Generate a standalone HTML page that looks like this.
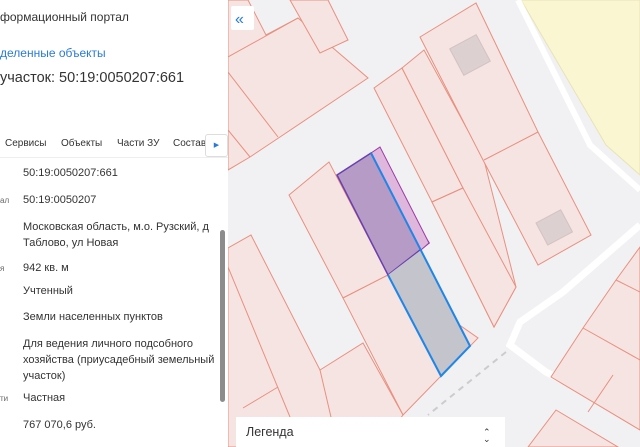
<!DOCTYPE html>
<html><head><meta charset="utf-8"><style>
body{margin:0;width:640px;height:447px;overflow:hidden;position:relative;font-family:"Liberation Sans",sans-serif;background:#f1f1f3}
#panel{position:absolute;left:0;top:0;width:228px;height:447px;background:#fff;color:#333}
.t{position:absolute;white-space:nowrap}
.v{position:absolute;left:23px;font-size:11px;color:#333;line-height:16px}
.l{position:absolute;left:0;font-size:8px;color:#666}
</style></head><body>
<svg style="position:absolute;left:228px;top:0" width="412" height="447" viewBox="0 0 412 447">
<rect width="412" height="447" fill="#f1f1f3"/>
<polygon points="293,0 412,0 412,175 378,145" fill="#faf6d2" stroke="#e8e3b6" stroke-width="1"/>
<polyline points="290,0 362,145 412,190" fill="none" stroke="#fff" stroke-width="6"/>
<polyline points="412,225 335,292 292,322 282,345 318,372 412,420" fill="none" stroke="#fff" stroke-width="7"/>
<g fill="#f6e4e2" stroke="#e8907f" stroke-width="1">
<polygon points="0,0 20,0 38,35 70,18 140,78 52,137 22,157 0,170"/>
<line x1="0" y1="57" x2="70" y2="18"/>
<line x1="0" y1="72" x2="50" y2="137"/>
<line x1="0" y1="130" x2="22" y2="157"/>
<polygon points="62,0 100,0 120,40 92,53"/>
<polygon points="146,88 174,68 235,188 204,202"/>
<polygon points="174,68 196,50 256,160 288,287 266,327 204,202 235,188"/>
<polygon points="192,37 248,3 310,132 363,235 310,265 255,160"/>
<line x1="256" y1="160" x2="310" y2="132"/>
<polygon points="204,202 235,188 288,287 266,327"/>
<polygon points="61,195 101,162 160,275 115,298"/>
<polygon points="115,298 160,275 250,338 175,415"/>
<polygon points="0,248 23,235 115,415 80,447 0,447"/>
<line x1="0" y1="267" x2="62" y2="417"/>
<polygon points="92,370 135,343 175,415 150,447 110,447"/>
<line x1="15" y1="408" x2="50" y2="387"/>
<polygon points="412,247 388,280 355,328 323,377 412,430"/>
<line x1="355" y1="328" x2="412" y2="360"/>
<line x1="388" y1="280" x2="412" y2="292"/>
<line x1="360" y1="412" x2="385" y2="375"/>
<polygon points="300,447 328,410 390,447"/>
</g>
<rect x="227" y="40" width="30" height="30" fill="#ddd0d0" stroke="#d4c2c2" transform="rotate(-28 242 55)"/>
<rect x="312" y="215" width="28" height="25" fill="#ddd0d0" stroke="#d4c2c2" transform="rotate(-28 326 227)"/>
<line x1="278" y1="352" x2="200" y2="415" stroke="#ccc" stroke-width="2" stroke-dasharray="6,5"/>
<polygon points="143,153 201,243 160,275 109,175" fill="#b69bc6" stroke="#6a3fb0" stroke-width="1.5"/>
<polygon points="143,153 152,147 201,243 193,250" fill="#dfb6dc" stroke="#9a3aa8" stroke-width="1"/>
<polygon points="193,250 242,346 213,376 160,275" fill="#c3c4cc"/>
<polyline points="143,153 242,346 213,376 160,275" fill="none" stroke="#1f86e8" stroke-width="2"/>
<rect x="3" y="6" width="23" height="24" fill="#fff" rx="2"/>
<text x="7" y="24" font-size="16" fill="#2a7bd6" font-family="Liberation Sans">«</text>
<rect x="8" y="417" width="269" height="30" fill="#fff"/>
<text x="18" y="436" font-size="12.5" fill="#333" font-family="Liberation Sans">Легенда</text>
<text x="255" y="435" font-size="9" fill="#333" font-family="Liberation Sans">⌃</text>
<text x="255" y="442" font-size="9" fill="#333" font-family="Liberation Sans">⌄</text>
</svg>
<div id="panel">
<div class="t" style="left:0;top:10px;font-size:12px">формационный портал</div>
<div class="t" style="left:0;top:46px;font-size:12px;color:#2a7bd6">деленные объекты</div>
<div class="t" style="left:0;top:70px;font-size:14.5px">участок: 50:19:0050207:661</div>
<div class="t" style="left:5px;top:138px;font-size:10px">Сервисы</div>
<div class="t" style="left:61px;top:138px;font-size:10px">Объекты</div>
<div class="t" style="left:117px;top:138px;font-size:10px">Части ЗУ</div>
<div class="t" style="left:173px;top:138px;font-size:10px">Состав</div>
<div style="position:absolute;left:205px;top:134px;width:21px;height:21px;border:1px solid #ddd;border-radius:3px;background:#fff;font-size:7px;color:#2a7bd6;text-align:center;line-height:21px">▶</div>
<div style="position:absolute;left:0;top:157px;width:228px;height:1px;background:#eee"></div>
<div class="v" style="top:165px">50:19:0050207:661</div>
<div class="l" style="top:196px">ал</div><div class="v" style="top:192px">50:19:0050207</div>
<div class="v" style="top:219px">Московская область, м.о. Рузский, д<br>Таблово, ул Новая</div>
<div class="l" style="top:264px">я</div><div class="v" style="top:260px">942 кв. м</div>
<div class="v" style="top:283px">Учтенный</div>
<div class="v" style="top:309px">Земли населенных пунктов</div>
<div class="v" style="top:336px">Для ведения личного подсобного<br>хозяйства (приусадебный земельный<br>участок)</div>
<div class="l" style="top:394px">ти</div><div class="v" style="top:390px">Частная</div>
<div class="v" style="top:417px">767 070,6 руб.</div>
<div style="position:absolute;left:220px;top:230px;width:5px;height:172px;background:#8c8c8c;border-radius:3px"></div>
</div>
</body></html>
